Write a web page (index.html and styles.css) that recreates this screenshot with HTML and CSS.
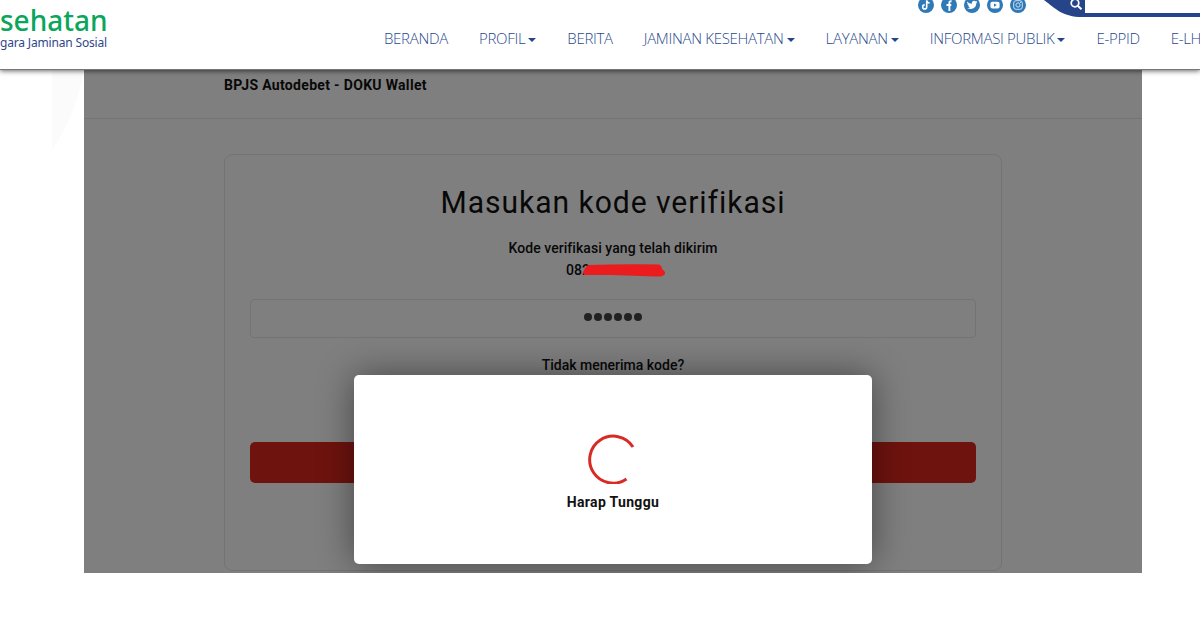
FILE: index.html
```html
<!DOCTYPE html>
<html lang="id">
<head>
    <meta charset="utf-8">
    <title>BPJS Kesehatan</title>
    <link rel="stylesheet" href="styles.css">
</head>
<body>
    <header class="header">
        <div class="logo">
            <span class="logo-name">sehatan</span>
            <span class="logo-sub">gara Jaminan Sosial</span>
        </div>
        <div class="header-main">
            <div class="topbar">
                <div class="socials">
                    <svg class="social" viewBox="0 0 16 16"><circle cx="8" cy="8" r="8" fill="#3079b7"/><path d="M8.7 3.2v6.7a2 2 0 1 1-2-2M8.7 3.4c.3 1.6 1.3 2.5 2.9 2.6" fill="none" stroke="#fff" stroke-width="1.6"/></svg>
                    <svg class="social" viewBox="0 0 16 16"><circle cx="8" cy="8" r="8" fill="#3079b7"/><path d="M8.4 14V5.7c0-1.2.6-1.7 2.2-1.5M5.5 8h4.8" fill="none" stroke="#fff" stroke-width="1.9"/></svg>
                    <svg class="social" viewBox="0 0 16 16"><circle cx="8" cy="8" r="8" fill="#3079b7"/><path d="M3.2 4.5c1.2 1.4 2.8 2.2 4.7 2.3-.4-2.8 2.4-3.8 3.9-2.3l1.4-.5-.7 1.3.9-.2-1.1 1.2c.1 4-4 7.3-9.2 4.8 1.2 0 2.2-.3 3-.9-1 0-1.7-.6-2-1.5h.9c-1-.3-1.6-1.1-1.7-2.1l.9.2c-1-.7-1.4-1.6-1-2.3z" fill="#fff"/></svg>
                    <svg class="social" viewBox="0 0 16 16"><circle cx="8" cy="8" r="8" fill="#3079b7"/><rect x="3.4" y="4.8" width="9.2" height="6.7" rx="2" fill="#fff"/><path d="M7 6.5v3.2l2.8-1.6z" fill="#3079b7"/></svg>
                    <svg class="social" viewBox="0 0 16 16"><circle cx="8" cy="8" r="8" fill="#3079b7"/><g fill="none" stroke="#cfe0f0" stroke-width="1"><rect x="3.7" y="3.7" width="8.6" height="8.6" rx="2.4"/><circle cx="8" cy="8" r="2.1"/></g><circle cx="10.6" cy="5.4" r=".6" fill="#cfe0f0"/></svg>
                </div>
                <svg class="search" viewBox="0 0 156 18">
                    <path d="M0 0C12 9 19 17 38 17H156V0z" fill="#25448a"/>
                    <path d="M41 0H156V13H41z" fill="#fff"/>
                    <circle cx="31" cy="3" r="3.8" fill="none" stroke="#fff" stroke-width="1.7"/>
                    <path d="M34 6l3.5 3.2" stroke="#fff" stroke-width="2"/>
                </svg>
            </div>
            <nav class="nav">
                <a class="nav-link">BERANDA</a>
                <a class="nav-link dropdown">PROFIL</a>
                <a class="nav-link">BERITA</a>
                <a class="nav-link dropdown">JAMINAN KESEHATAN</a>
                <a class="nav-link dropdown">LAYANAN</a>
                <a class="nav-link dropdown">INFORMASI PUBLIK</a>
                <a class="nav-link">E-PPID</a>
                <a class="nav-link">E-LHKPN</a>
            </nav>
        </div>
    </header>

    <main class="page">
        <svg class="page-mark" viewBox="0 0 32 80"><path d="M0 0H32Q24 45 0 80z" fill="#fbfbfb"/></svg>
        <section class="frame">
            <div class="frame-title">BPJS Autodebet - DOKU Wallet</div>
            <div class="card">
                <h1 class="card-title">Masukan kode verifikasi</h1>
                <p class="card-text">Kode verifikasi yang telah dikirim</p>
                <p class="phone">082</p>
                <div class="code-input">
                    <i></i><i></i><i></i><i></i><i></i><i></i>
                </div>
                <p class="resend">Tidak menerima kode?</p>
                <div class="submit"></div>
            </div>
            <div class="overlay">
                <div class="modal">
                    <svg class="spinner" viewBox="0 0 50 50"><path d="M45 13A23.5 23.5 0 1 0 38.5 45" fill="none" stroke="#d92b25" stroke-width="3"/></svg>
                    <div class="modal-text">Harap Tunggu</div>
                </div>
            </div>
            <svg class="scribble" viewBox="0 0 84 14"><path d="M6 1Q40 0 77 .5Q80 2 80 5Q85 8 82 11Q80 13 73 12.5L30 11L2 11Q-1 8 6 1z" fill="#ea1c1e"/></svg>
        </section>
    </main>
</body>
</html>
```
FILE: styles.css
```css
* {
    box-sizing: border-box;
}
body {
    margin: 0;
    height: 620px;
    overflow: hidden;
    background: #fff;
    font-family: Roboto, Arial, sans-serif;
}
.header {
    position: relative;
    z-index: 2;
    display: flex;
    height: 70px;
    background: #fff;
    border-bottom: 1px solid #777;
    box-shadow: 0 1px 5px rgba(0, 0, 0, 0.6);
}
.logo {
    display: flex;
    flex-direction: column;
    width: 384px;
    flex-shrink: 0;
    padding-top: 4px;
    white-space: nowrap;
}
.logo-name {
    font-family: "Noto Sans", sans-serif;
    font-size: 28px;
    font-weight: 500;
    line-height: 32px;
    color: #0aa65b;
}
.logo-sub {
    font-family: "Noto Sans", sans-serif;
    font-size: 12px;
    line-height: 14px;
    letter-spacing: -0.17px;
    color: #30468c;
}
.header-main {
    flex-shrink: 0;
}
.topbar {
    display: flex;
    height: 18px;
    padding-left: 534px;
}
.socials {
    display: flex;
    gap: 7px;
    margin-top: -3px;
}
.social {
    width: 16px;
    height: 16px;
}
.search {
    width: 156px;
    height: 18px;
    margin-left: 18px;
}
.nav {
    display: flex;
    gap: 31px;
    padding-top: 9px;
    font-family: "Open Sans", sans-serif;
    font-size: 15px;
    font-weight: 300;
    line-height: 22px;
    letter-spacing: -0.3px;
    white-space: nowrap;
    color: #29478c;
}
.nav-link {
    display: flex;
    align-items: center;
}
.dropdown::after {
    content: "";
    margin: 4px 0 0 3px;
    border: 4px solid transparent;
    border-top-color: #25448a;
    border-bottom: 0;
}
.page {
    display: flex;
    padding-left: 52px;
}
.page-mark {
    width: 32px;
    height: 80px;
}
.frame {
    position: relative;
    width: 1058px;
    height: 503px;
    overflow: hidden;
    color: #111;
}
.frame-title {
    height: 49px;
    padding: 5px 0 0 140px;
    border-bottom: 1px solid #e8e8e8;
    font-size: 14px;
    font-weight: 700;
    line-height: 20px;
    letter-spacing: 0.32px;
}
.card {
    width: 778px;
    height: 417px;
    margin: 35px 0 0 140px;
    padding: 26px 25px 0;
    border: 1px solid #e6e6e6;
    border-radius: 8px;
    text-align: center;
}
.card-title {
    margin: 0;
    font-size: 32px;
    font-weight: 400;
    line-height: 42px;
    letter-spacing: 1px;
    transform: scaleX(0.94);
}
.card-text,
.phone,
.resend {
    margin: 0;
    font-size: 14px;
    font-weight: 500;
    line-height: 22px;
}
.card-text {
    margin-top: 14px;
    letter-spacing: 0.06px;
}
.phone {
    padding-left: 316px;
    text-align: left;
}
.code-input {
    display: flex;
    justify-content: center;
    align-items: center;
    gap: 2px;
    height: 39px;
    margin-top: 18px;
    padding-bottom: 3px;
    border: 1px solid #e6e6e6;
    border-radius: 4px;
}
.code-input i {
    width: 8px;
    height: 8px;
    border-radius: 50%;
    background: #444;
}
.resend {
    margin-top: 16px;
}
.submit {
    height: 41px;
    margin-top: 66px;
    border-radius: 5px;
    background: #df261d;
}
.overlay {
    position: absolute;
    inset: 0;
    padding: 305px 0 0 270px;
    background: rgba(0, 0, 0, 0.5);
}
/* sits above the overlay so the number stays hidden */
.scribble {
    position: absolute;
    left: 498px;
    top: 194px;
    width: 84px;
    height: 14px;
}
.modal {
    display: flex;
    flex-direction: column;
    align-items: center;
    width: 518px;
    height: 189px;
    padding-top: 59px;
    border-radius: 5px;
    background: #fff;
    box-shadow: 0 0 36px rgba(0, 0, 0, 0.45);
}
.spinner {
    width: 50px;
    height: 50px;
}
.modal-text {
    margin-top: 8px;
    font-size: 14px;
    font-weight: 700;
    line-height: 20px;
    letter-spacing: 0.32px;
}
```
